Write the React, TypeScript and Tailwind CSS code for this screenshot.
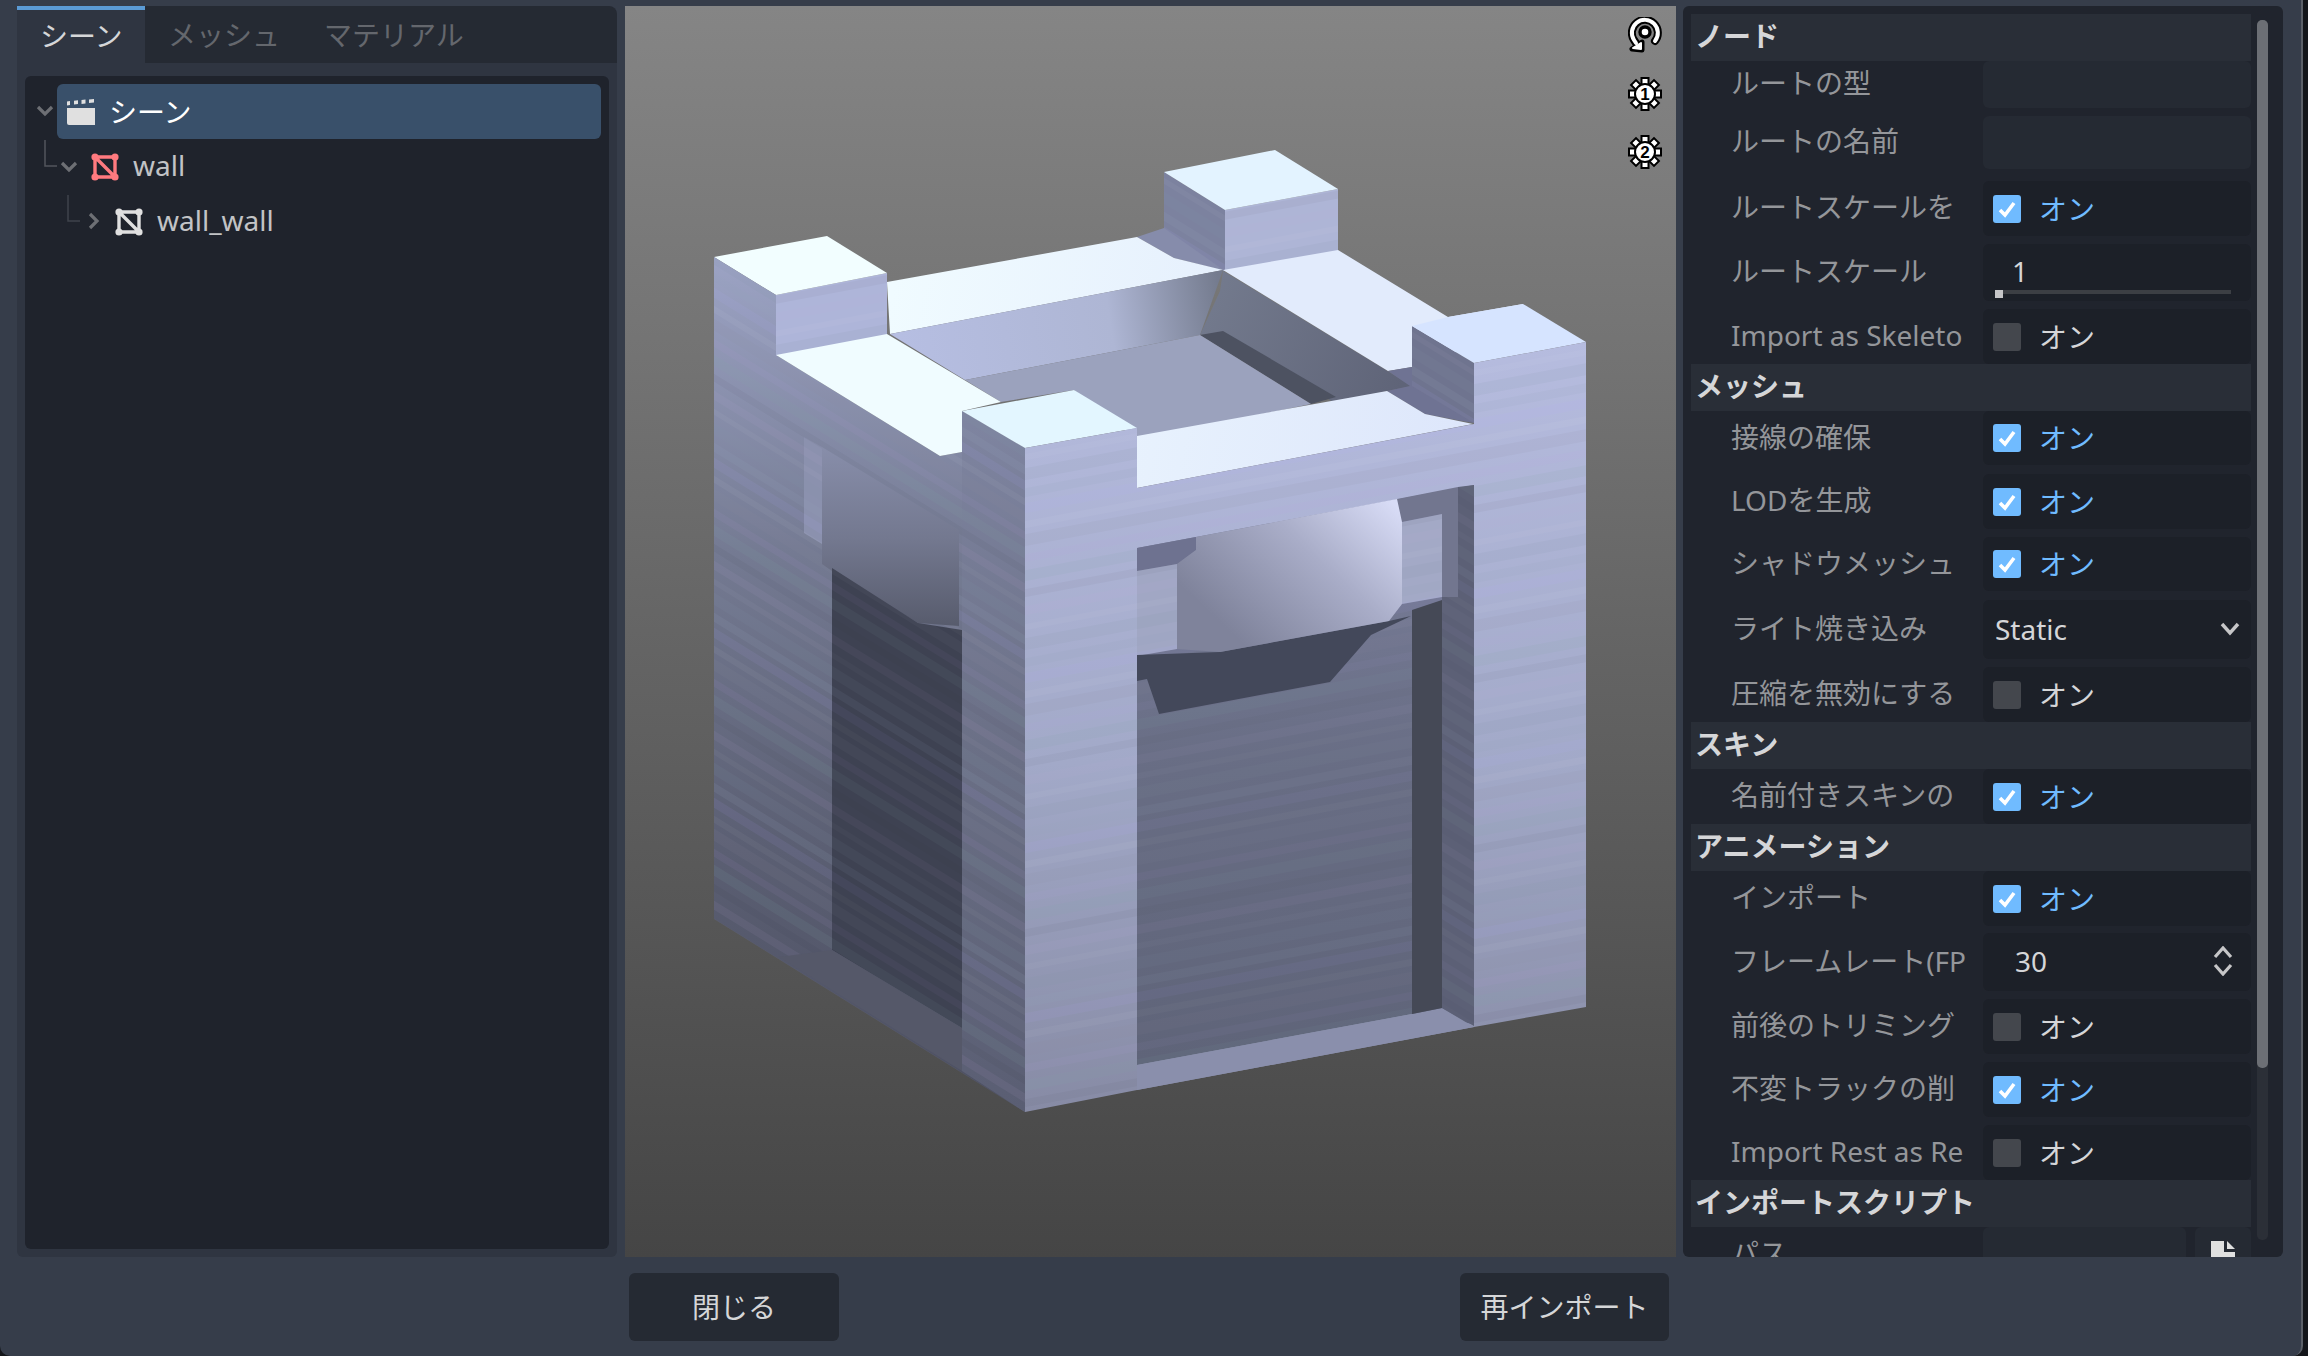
import React from "react";

type Row =
  | { kind: "header"; label: string; cls: string }
  | { kind: "empty"; label: string; cls: string }
  | { kind: "check"; label: string; on: boolean; cls: string }
  | { kind: "slider"; label: string; cls: string }
  | { kind: "select"; label: string; cls: string }
  | { kind: "spin"; label: string; cls: string }
  | { kind: "path"; label: string; cls: string };

const rows: Row[] = [
  { kind: "header", label: "ノード", cls: "h-[47px]" },
  { kind: "empty", label: "ルートの型", cls: "h-[47px]" },
  { kind: "empty", label: "ルートの名前", cls: "h-[53px] mt-[8px]" },
  { kind: "check", label: "ルートスケールを", on: true, cls: "h-[55px] mt-[12px]" },
  { kind: "slider", label: "ルートスケール", cls: "h-[57px] mt-[8px]" },
  { kind: "check", label: "Import as Skeleto", on: false, cls: "h-[55px] mt-[8px]" },
  { kind: "header", label: "メッシュ", cls: "h-[47px]" },
  { kind: "check", label: "接線の確保", on: true, cls: "h-[54px]" },
  { kind: "check", label: "LODを生成", on: true, cls: "h-[55px] mt-[9px]" },
  { kind: "check", label: "シャドウメッシュ", on: true, cls: "h-[54px] mt-[8px]" },
  { kind: "select", label: "ライト焼き込み", cls: "h-[59px] mt-[9px]" },
  { kind: "check", label: "圧縮を無効にする", on: false, cls: "h-[55px] mt-[8px]" },
  { kind: "header", label: "スキン", cls: "h-[47px]" },
  { kind: "check", label: "名前付きスキンの", on: true, cls: "h-[55px]" },
  { kind: "header", label: "アニメーション", cls: "h-[47px]" },
  { kind: "check", label: "インポート", on: true, cls: "h-[55px]" },
  { kind: "spin", label: "フレームレート(FP", cls: "h-[58px] mt-[7px]" },
  { kind: "check", label: "前後のトリミング", on: false, cls: "h-[55px] mt-[8px]" },
  { kind: "check", label: "不変トラックの削", on: true, cls: "h-[55px] mt-[8px]" },
  { kind: "check", label: "Import Rest as Re", on: false, cls: "h-[55px] mt-[8px]" },
  { kind: "header", label: "インポートスクリプト", cls: "h-[47px]" },
  { kind: "path", label: "パス", cls: "h-[55px]" },
];

const Check = ({ on }: { on: boolean }) => (
  <div className="flex h-full items-center pl-[10px]">
    <div className={`flex h-[28px] w-[28px] items-center justify-center rounded-[3px] ${on ? "bg-[#70bbff]" : "bg-[#44474d]"}`}>
      {on && (
        <svg width="20" height="20" viewBox="0 0 20 20">
          <path d="M3 11 L8 16 L17 4" fill="none" stroke="#fff" strokeWidth="3.6" />
        </svg>
      )}
    </div>
    <span className={`ml-[18px] ${on ? "text-[#70bbff]" : "text-[#d5d6d8]"}`}>オン</span>
  </div>
);

const PropValue = ({ row }: { row: Row }) => {
  if (row.kind === "check") {
    return (
      <div className="h-full rounded-[6px] bg-[#1c2028]">
        <Check on={row.on} />
      </div>
    );
  }
  if (row.kind === "slider") {
    return (
      <div className="relative h-full rounded-[6px] bg-[#1c2028] pl-[29px] pt-[13px] text-[#d5d6d8]">
        1
        <div className="absolute left-[12px] top-[46px] h-[4px] w-[236px] bg-[#3c3f44]" />
        <div className="absolute left-[12px] top-[46px] h-[8px] w-[8px] bg-[#c6c6c8]" />
      </div>
    );
  }
  if (row.kind === "select") {
    return (
      <div className="flex h-full items-center justify-between rounded-[6px] bg-[#1c2028] pb-[2px] pl-[12px] pr-[10px] text-[#d5d6d8]">
        Static
        <svg width="22" height="16" viewBox="0 0 22 16">
          <path d="M3 3 L11 12 L19 3" fill="none" stroke="#c6c6c8" strokeWidth="3.4" />
        </svg>
      </div>
    );
  }
  if (row.kind === "spin") {
    return (
      <div className="flex h-full items-center justify-between rounded-[6px] bg-[#1c2028] pb-[2px] pl-[32px] pr-[17px] text-[#d5d6d8]">
        30
        <svg width="22" height="30" viewBox="0 0 22 30">
          <path d="M3 11 L11 2 L19 11 M3 19 L11 28 L19 19" fill="none" stroke="#c6c6c8" strokeWidth="3.2" />
        </svg>
      </div>
    );
  }
  if (row.kind === "path") {
    return (
      <div className="flex h-full gap-[9px]">
        <div className="h-full w-[203px] rounded-[6px] bg-[#252a33]" />
        <div className="flex h-full flex-1 justify-center rounded-[6px] bg-[#252a33] pt-[14px]">
          <svg width="24" height="30" viewBox="0 0 24 30">
            <path d="M0 0 H13 V11 H24 V30 H0 Z M16 0 L24 8 H16 Z" fill="#e0e0e0" />
          </svg>
        </div>
      </div>
    );
  }
  return <div className="h-full rounded-[6px] bg-[#252a33]" />;
};

const PropRow = ({ row }: { row: Row }) => {
  if (row.kind === "header") {
    return (
      <div className={`flex items-center bg-[#292e37] pb-[3px] pl-[4px] font-bold text-[#d5d6d8] ${row.cls}`}>{row.label}</div>
    );
  }
  return (
    <div className={`flex ${row.cls}`}>
      <div className="flex h-full w-[292px] items-center whitespace-nowrap pb-[3px] pl-[40px] text-[#94969a]">{row.label}</div>
      <div className="w-[268px]">
        <PropValue row={row} />
      </div>
    </div>
  );
};

const MeshIcon = ({ color }: { color: string }) => (
  <svg width="28" height="28" viewBox="0 0 28 28" className="shrink-0">
    <path d="M4 4 H24 V24 H4 Z M4 4 L24 24" fill="none" stroke={color} strokeWidth="3.4" />
    <circle cx="4" cy="4" r="3.6" fill={color} />
    <circle cx="24" cy="4" r="3.6" fill={color} />
    <circle cx="4" cy="24" r="3.6" fill={color} />
    <circle cx="24" cy="24" r="3.6" fill={color} />
  </svg>
);

const Clapboard = () => (
  <svg width="29" height="26" viewBox="0 0 29 26" className="shrink-0">
    <path d="M1 9 H29 V26 H3 Q1 26 1 24 Z" fill="#e0e0e0" />
    <path d="M1 2.5 L4 2 V6 L1 6.5 Z M8 1.8 L12 1.3 V5 L8 5.5 Z M15.5 1 L19.5 .6 V4.4 L15.5 4.9 Z M23 .4 L28 0 V3.6 L23 4.1 Z" fill="#e0e0e0" />
  </svg>
);

const SunIcon = ({ n }: { n: string }) => (
  <svg width="34" height="34" viewBox="0 0 34 34">
    <g fill="#fff" stroke="#000" strokeWidth="2">
      <rect x="13.5" y="1" width="7" height="7" />
      <rect x="13.5" y="26" width="7" height="7" />
      <rect x="1" y="13.5" width="7" height="7" />
      <rect x="26" y="13.5" width="7" height="7" />
      <rect x="4.5" y="4.5" width="7" height="7" transform="rotate(45 8 8)" />
      <rect x="22.5" y="4.5" width="7" height="7" transform="rotate(45 26 8)" />
      <rect x="4.5" y="22.5" width="7" height="7" transform="rotate(45 8 26)" />
      <rect x="22.5" y="22.5" width="7" height="7" transform="rotate(45 26 26)" />
      <circle cx="17" cy="17" r="10" />
    </g>
    <text x="17" y="23" textAnchor="middle" fontSize="17" fontWeight="700" fill="#000" fontFamily="Liberation Sans, sans-serif">
      {n}
    </text>
  </svg>
);

const OrbitIcon = () => (
  <svg width="34" height="36" viewBox="0 0 34 36">
    <g fill="none" strokeLinecap="round" strokeLinejoin="round">
      <path d="M27 24 A13 13 0 1 0 6 23 L8 26" stroke="#000" strokeWidth="8" />
      <path d="M4 32 L14 33 L14 25 Z" stroke="#000" strokeWidth="5" fill="#000" />
      <path d="M27 24 A13 13 0 1 0 6 23 L8 26" stroke="#fff" strokeWidth="4" />
      <path d="M5 31 L13 32 L13 26 Z" stroke="#fff" strokeWidth="2" fill="#fff" />
      <circle cx="17" cy="15" r="5" fill="#fff" stroke="#000" strokeWidth="3.4" />
    </g>
  </svg>
);

// 3D model faces, in screen pixels of the page
const Face = ({ p, fill, band, dim }: { p: string; fill: string; band?: "L" | "R"; dim?: boolean }) => (
  <>
    <polygon points={p} fill={fill} />
    {band && <polygon points={p} fill={band === "L" ? "url(#bandL)" : "url(#bandR)"} opacity={dim ? 0.65 : 1} />}
  </>
);

const Bands = () => (
  <>
    <rect y="0" width="120" height="9" fill="#8fa4b8" opacity=".13" />
    <rect y="15" width="120" height="10" fill="#a9a6ff" opacity=".08" />
    <rect y="33" width="120" height="7" fill="#fff" opacity=".04" />
    <rect y="46" width="120" height="12" fill="#8a90a0" opacity=".1" />
    <rect y="66" width="120" height="8" fill="#b39fe0" opacity=".07" />
    <rect y="82" width="120" height="11" fill="#7fa0a8" opacity=".11" />
    <rect y="101" width="120" height="8" fill="#000" opacity=".03" />
    <rect y="118" width="120" height="9" fill="#c0a8d8" opacity=".08" />
    <rect y="136" width="120" height="6" fill="#fff" opacity=".03" />
    <rect y="150" width="120" height="12" fill="#7f8ea0" opacity=".11" />
  </>
);

const Model = () => (
  <svg viewBox="625 6 1051 1251" className="absolute inset-0 h-full w-full">
    <defs>
      <pattern id="bandR" width="120" height="170" patternUnits="userSpaceOnUse" patternTransform="skewY(-10.6)">
        <Bands />
      </pattern>
      <pattern id="bandL" width="120" height="170" patternUnits="userSpaceOnUse" patternTransform="skewY(31.8)">
        <Bands />
      </pattern>
      <linearGradient id="frontG" gradientUnits="userSpaceOnUse" x1="0" y1="340" x2="0" y2="1110">
        <stop offset="0" stopColor="#b6bcdf" />
        <stop offset=".55" stopColor="#a2a9c8" />
        <stop offset="1" stopColor="#878ba5" />
      </linearGradient>
      <linearGradient id="leftG" gradientUnits="userSpaceOnUse" x1="0" y1="260" x2="0" y2="1100">
        <stop offset="0" stopColor="#9ca3c4" />
        <stop offset=".35" stopColor="#747a92" />
        <stop offset=".7" stopColor="#5b5f73" />
        <stop offset="1" stopColor="#4d5062" />
      </linearGradient>
      <linearGradient id="pillarG" gradientUnits="userSpaceOnUse" x1="0" y1="410" x2="0" y2="1110">
        <stop offset="0" stopColor="#7f85a1" />
        <stop offset=".5" stopColor="#6a6f85" />
        <stop offset="1" stopColor="#5a5e73" />
      </linearGradient>
      <linearGradient id="recessG" gradientUnits="userSpaceOnUse" x1="0" y1="480" x2="0" y2="1060">
        <stop offset="0" stopColor="#7b809c" />
        <stop offset=".5" stopColor="#686d84" />
        <stop offset="1" stopColor="#5f6479" />
      </linearGradient>
      <linearGradient id="lintelG" gradientUnits="userSpaceOnUse" x1="1390" y1="500" x2="1250" y2="650">
        <stop offset="0" stopColor="#d8dcf6" />
        <stop offset=".45" stopColor="#a9adc8" />
        <stop offset="1" stopColor="#7f839b" />
      </linearGradient>
      <linearGradient id="shadeG" gradientUnits="userSpaceOnUse" x1="0" y1="450" x2="0" y2="630">
        <stop offset="0" stopColor="#878da9" />
        <stop offset=".5" stopColor="#73788f" />
        <stop offset="1" stopColor="#565a6b" />
      </linearGradient>
      <linearGradient id="innerG" gradientUnits="userSpaceOnUse" x1="900" y1="340" x2="1220" y2="290">
        <stop offset="0" stopColor="#b6bee2" />
        <stop offset=".65" stopColor="#aeb6d4" />
        <stop offset="1" stopColor="#747b8e" />
      </linearGradient>
      <linearGradient id="innerR" gradientUnits="userSpaceOnUse" x1="1200" y1="290" x2="1400" y2="390">
        <stop offset="0" stopColor="#747b8e" />
        <stop offset="1" stopColor="#5f6478" />
      </linearGradient>
      <linearGradient id="topG" gradientUnits="userSpaceOnUse" x1="890" y1="300" x2="1480" y2="420">
        <stop offset="0" stopColor="#f0fbff" />
        <stop offset="1" stopColor="#dde6fb" />
      </linearGradient>
    </defs>

    {/* back tower */}
    <Face p="1164,172 1225,210 1225,271 1164,233" fill="#7c829f" band="L" />
    <Face p="1137,237 1164,228 1225,271 1174,258" fill="#868cab" />
    <Face p="1225,210 1338,189 1338,252 1225,271" fill="#aeb5d6" band="R" />
    <polygon points="1164,172 1275,150 1338,189 1225,210" fill="#e3f3ff" />

    {/* ring top and inside */}
    <polygon points="887,282 1137,237 1174,258 1223,270 890,334" fill="url(#topG)" />
    <polygon points="890,334 1223,270 1200,335 965,380" fill="url(#innerG)" />
    <polygon points="1223,271 1412,386 1333,402 1223,332 1200,335 1220,291" fill="url(#innerR)" />
    <polygon points="1200,335 1223,331 1336,397 1311,404" fill="#4d5261" />
    <polygon points="965,380 1200,335 1311,404 1137,440 1074,390 1001,402" fill="#9ba2bd" />
    <polygon points="1223,270 1338,250 1448,317 1523,304 1523,330 1412,367 1388,371" fill="#e2ebfc" />
    <polygon points="1388,371 1412,367 1474,423 1457,420 1425,414 1387,391 1410,386" fill="#6f7393" />

    {/* left tower back sides */}
    <Face p="776,295 887,273 887,336 776,356" fill="#aeb5d9" band="R" />
    <polygon points="714,257 827,236 887,273 776,295" fill="#f2feff" />

    {/* left facing wall */}
    <Face p="714,257 776,295 776,355 940,456 962,452 962,411 1025,448 1025,1112 714,919" fill="url(#leftG)" band="L" />
    <Face p="804,437 822,447 822,544 804,533" fill="#8b91ae" band="L" />
    <polygon points="822,447 959,530 959,626 918,623 832,571 822,564" fill="url(#shadeG)" />
    <Face p="832,568 918,623 962,630 962,1028 832,950" fill="#3e4252" band="L" dim />
    <polygon points="779,957 832,950 962,1028 962,1071" fill="#555869" />
    <Face p="962,411 1025,448 1025,1112 962,1071" fill="url(#pillarG)" band="L" />
    <polygon points="776,355 887,334 1001,402 962,411 962,452 940,456" fill="#f0fcff" />

    {/* front tower top and front wall top */}
    <polygon points="962,411 1074,390 1137,428 1025,448" fill="#e3f6ff" />
    <polygon points="1137,436 1387,391 1425,414 1473,424 1137,488" fill="url(#topG)" />

    {/* right tower */}
    <Face p="1412,326 1474,363 1474,423 1412,386" fill="#6f748f" band="L" />
    <polygon points="1412,326 1448,317 1523,304 1586,342 1474,363" fill="#d6e4ff" />

    {/* front facing wall */}
    <Face p="1025,448 1137,428 1137,488 1474,424 1474,363 1586,342 1586,1007 1474,1027 1137,1090 1025,1112" fill="url(#frontG)" band="R" />

    {/* door recess */}
    <Face p="1137,548 1474,485 1474,1024 1412,1014 1137,1065" fill="url(#recessG)" band="R" dim />
    <polygon points="1137,1065 1412,1014 1442,1008 1474,1027 1137,1090" fill="#8a8fac" />
    <polygon points="1412,610 1442,600 1442,1008 1412,1014" fill="#454956" />
    <Face p="1458,487 1474,485 1474,1026 1442,1008 1442,597 1458,597" fill="#5c6076" band="L" dim />
    <polygon points="1137,548 1196,537 1196,550 1177,564 1137,571" fill="#6e7290" />
    <polygon points="1397,499 1458,487 1458,597 1442,597 1442,514 1402,522" fill="#72768f" />
    <Face p="1137,571 1177,564 1177,649 1137,656" fill="#a1a7c4" band="R" />
    <Face p="1402,522 1442,514 1442,597 1402,604" fill="#a3a9c6" band="R" />
    <polygon points="1137,655 1220,652 1389,621 1411,616 1371,635 1330,682 1159,714 1147,679 1137,681" fill="#43485a" />
    <polygon points="1196,537 1397,499 1402,522 1402,604 1389,621 1220,652 1177,649 1177,564 1196,550" fill="url(#lintelG)" />
  </svg>
);

const Tabs = () => (
  <div className="flex h-[57px] rounded-tr-[8px] bg-[#252a33]">
    <div className="flex w-[128px] items-center border-t-[4px] border-[#5b9bd5] bg-[#2f3541] pb-[2px] pl-[23px] text-[#d5d6d8]">シーン</div>
    <div className="flex items-center pl-[23px] text-[#64676d]">メッシュ</div>
    <div className="flex items-center pl-[44px] text-[#64676d]">マテリアル</div>
  </div>
);

const Tree = () => (
  <div className="mx-[8px] h-[1173px] rounded-[6px] bg-[#1f232c] pt-[8px]">
    <div className="flex h-[55px] items-center">
      <svg width="32" height="55" viewBox="0 0 32 55" className="shrink-0">
        <path d="M13 24 L20 31 L27 24" transform="translate(0 -1)" fill="none" stroke="#6d6f74" strokeWidth="3.2" />
      </svg>
      <div className="mr-[8px] flex h-[55px] flex-1 items-center gap-[14px] rounded-[6px] bg-[#39506a] pl-[9px] text-white">
        <Clapboard />
        シーン
      </div>
    </div>
    <div className="flex h-[55px] items-center text-[#c2c3c6]">
      <svg width="66" height="55" viewBox="0 0 66 55" className="shrink-0">
        <path d="M20 1 V27 H32" fill="none" stroke="#53565c" strokeWidth="1.5" />
        <path d="M37 24 L44 31 L51 24" fill="none" stroke="#6d6f74" strokeWidth="3.2" />
      </svg>
      <MeshIcon color="#ff7a7f" />
      <span className="ml-[14px] pb-[3px]">wall</span>
    </div>
    <div className="flex h-[55px] items-center text-[#c2c3c6]">
      <svg width="90" height="55" viewBox="0 0 90 55" className="shrink-0">
        <path d="M43 1 V27 H55" fill="none" stroke="#3f434b" strokeWidth="1.5" />
        <path d="M65 20 L72 27 L65 34" fill="none" stroke="#6d6f74" strokeWidth="3.2" />
      </svg>
      <MeshIcon color="#e0e0e0" />
      <span className="ml-[14px] pb-[3px]">wall_wall</span>
    </div>
  </div>
);

export default function App() {
  return (
    <div className="flex h-[1356px] w-[2308px] overflow-hidden bg-[#14161a] text-[28px] leading-none [font-family:'Noto_Sans','Noto_Sans_CJK_JP',sans-serif]">
      <div className="flex h-full w-[2303px] flex-col rounded-b-[10px] border-r-[2px] border-[#5b6068] bg-[#363d4a] pt-[6px]">
        <div className="flex h-[1251px] pl-[17px]">
          <div className="h-full w-[600px]">
            <Tabs />
            <div className="h-[1194px] rounded-b-[6px] bg-[#2f3541] pt-[13px]">
              <Tree />
            </div>
          </div>
          <div className="relative ml-[8px] h-full w-[1051px] bg-[linear-gradient(#858585,#454545)]">
            <Model />
            <div className="absolute left-[1003px] top-[11px] flex flex-col items-center gap-[24px]">
              <OrbitIcon />
              <SunIcon n="1" />
              <SunIcon n="2" />
            </div>
          </div>
          <div className="ml-[7px] flex h-full w-[600px] overflow-hidden rounded-[6px] bg-[#20242d] pl-[8px] pt-[8px]">
            <div className="w-[560px] shrink-0">
              {rows.map((r) => (
                <PropRow key={r.label} row={r} />
              ))}
            </div>
            <div className="ml-[6px] mt-[6px] h-[1220px] w-[11px] shrink-0 rounded-[5px] bg-[#2b2f37]">
              <div className="h-[1048px] rounded-[5px] bg-[#6c6f75]" />
            </div>
          </div>
        </div>
        <div className="flex gap-[621px] pl-[629px] pt-[16px]">
          <div className="flex h-[68px] w-[210px] items-center justify-center rounded-[6px] bg-[#252a33] text-[#d5d6d8]">閉じる</div>
          <div className="flex h-[68px] w-[209px] items-center justify-center rounded-[6px] bg-[#252a33] text-[#d5d6d8]">再インポート</div>
        </div>
      </div>
    </div>
  );
}
